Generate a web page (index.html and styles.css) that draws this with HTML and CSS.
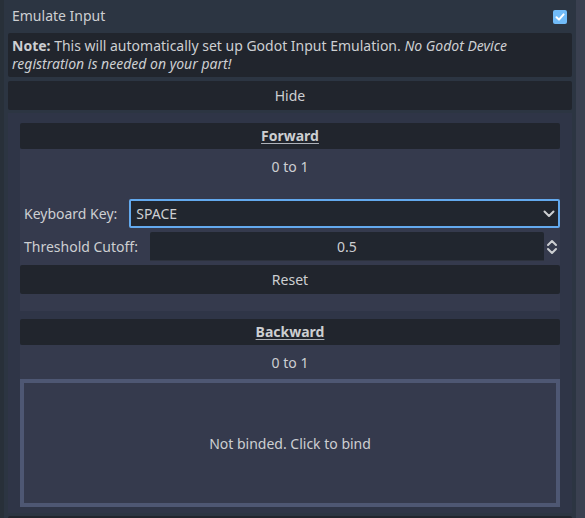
FILE: index.html
```html
<!DOCTYPE html>
<html>
<head>
<meta charset="utf-8">
<link rel="stylesheet" href="styles.css">
</head>
<body>
<div class="root">
  <div class="lstrip"></div>
  <div class="main">
    <div class="toggle">
      <span class="toggle-label">Emulate Input</span>
      <span class="check"><svg width="14" height="14" viewBox="0 0 14 14"><path d="M3.5 7.2 L6 9.6 L10.6 4.4" fill="none" stroke="#ffffff" stroke-width="2" stroke-linecap="round" stroke-linejoin="round"/></svg></span>
    </div>
    <div class="note"><b>Note:</b> This will automatically set up Godot Input Emulation. <i>No Godot Device registration is needed on your part!</i></div>
    <div class="btn hide">Hide</div>
    <div class="container">
      <div class="section">
        <div class="sec-head"><span class="ul">Forward</span></div>
        <div class="sec-body fwd">
          <div class="range">0 to 1</div>
          <div class="field key-row">
            <span class="lbl">Keyboard Key:</span>
            <div class="select"><span>SPACE</span><svg width="12" height="8" viewBox="0 0 12 8"><path d="M1.5 1.5 L6 6 L10.5 1.5" fill="none" stroke="#cdcfd2" stroke-width="2" stroke-linecap="round" stroke-linejoin="round"/></svg></div>
          </div>
          <div class="field">
            <span class="lbl">Threshold Cutoff:</span>
            <div class="spin">0.5</div>
            <svg class="updown" width="12" height="16" viewBox="0 0 12 16"><path d="M2 6 L6 2 L10 6 M2 10 L6 14 L10 10" fill="none" stroke="#cdcfd2" stroke-width="2" stroke-linecap="round" stroke-linejoin="round"/></svg>
          </div>
          <div class="btn reset">Reset</div>
        </div>
      </div>
      <div class="section">
        <div class="sec-head"><span class="ul">Backward</span></div>
        <div class="sec-body">
          <div class="range">0 to 1</div>
          <div class="bind">Not binded. Click to bind</div>
        </div>
      </div>
    </div>
    <div class="next"></div>
  </div>
  <div class="scroll"></div>
</div>
</body>
</html>
```

FILE: styles.css
```css
* { box-sizing: border-box; }
html, body { margin: 0; padding: 0; }
body {
  background: #2c3542;
  font-family: "Noto Sans", "Open Sans", sans-serif;
  font-size: 14px;
  color: #cdcfd2;
  overflow: hidden;
}
.root {
  display: flex;
  width: 585px;
  height: 518px;
  overflow: hidden;
}
.lstrip { width: 4px; background: #283039; flex: none; }
.scroll { width: 9px; background: #3a4050; flex: none; }
.main {
  width: 572px;
  padding: 0 4px;
  display: flex;
  flex-direction: column;
  flex: none;
}
.main > * { flex: none; }
.toggle {
  height: 33px;
  display: flex;
  align-items: center;
  justify-content: space-between;
  padding: 0 5px 0 4px;
}
.toggle-label { margin-bottom: 2px; }
.check {
  width: 14px;
  height: 14px;
  background: #71bbf8;
  border-radius: 2px;
  display: block;
}
.check svg { display: block; }
.note {
  background: #21252d;
  height: 44px;
  padding: 4px 4px 0 4px;
  line-height: 18px;
  border-radius: 2px;
}
.btn {
  background: #21252d;
  height: 29px;
  display: flex;
  align-items: center;
  justify-content: center;
  border-radius: 2px;
  flex: none;
}
.hide { margin-top: 4px; }
.container {
  margin-top: 3px;
  background: #2f3547;
  padding: 10px 12px 6px;
  display: flex;
  flex-direction: column;
  gap: 8px;
}
.section { display: flex; flex-direction: column; flex: none; }
.sec-head {
  background: #21252d;
  height: 26px;
  display: flex;
  align-items: center;
  justify-content: center;
  font-weight: bold;
  border-radius: 2px;
  flex: none;
}
.ul {
  text-decoration: underline;
  text-decoration-color: #aeb2b9;
  text-underline-offset: 2px;
  margin-bottom: 1px;
}
.sec-body {
  background: #353a4d;
  display: flex;
  flex-direction: column;
  flex: none;
}
.sec-body > * { flex: none; }
.sec-body.fwd { padding-bottom: 17px; }
.range {
  height: 34px;
  display: flex;
  align-items: center;
  justify-content: center;
}
.field {
  display: flex;
  align-items: center;
  height: 29px;
  margin-top: 4px;
}
.key-row { margin-top: 16px; }
.lbl {
  padding-left: 4px;
  margin-right: 12px;
  white-space: nowrap;
}
.select {
  flex: 1;
  height: 29px;
  background: #21262f;
  border: 2px solid #63a9ee;
  border-radius: 2px;
  display: flex;
  align-items: center;
  justify-content: space-between;
  padding: 0 3px 0 5px;
}
.select svg { display: block; }
.spin {
  flex: 1;
  height: 29px;
  background: #21262f;
  border-bottom: 1px solid #2d323d;
  display: flex;
  align-items: center;
  justify-content: center;
  border-radius: 2px 2px 0 0;
}
.updown {
  display: block;
  margin: 0 2px 0 2px;
  flex: none;
}
.reset { margin-top: 4px; }
.bind {
  height: 128px;
  border: 4px solid #4e5773;
  display: flex;
  align-items: center;
  justify-content: center;
}
.next {
  margin-top: 3px;
  height: 10px;
  background: #21252d;
  border-radius: 2px;
}
```
